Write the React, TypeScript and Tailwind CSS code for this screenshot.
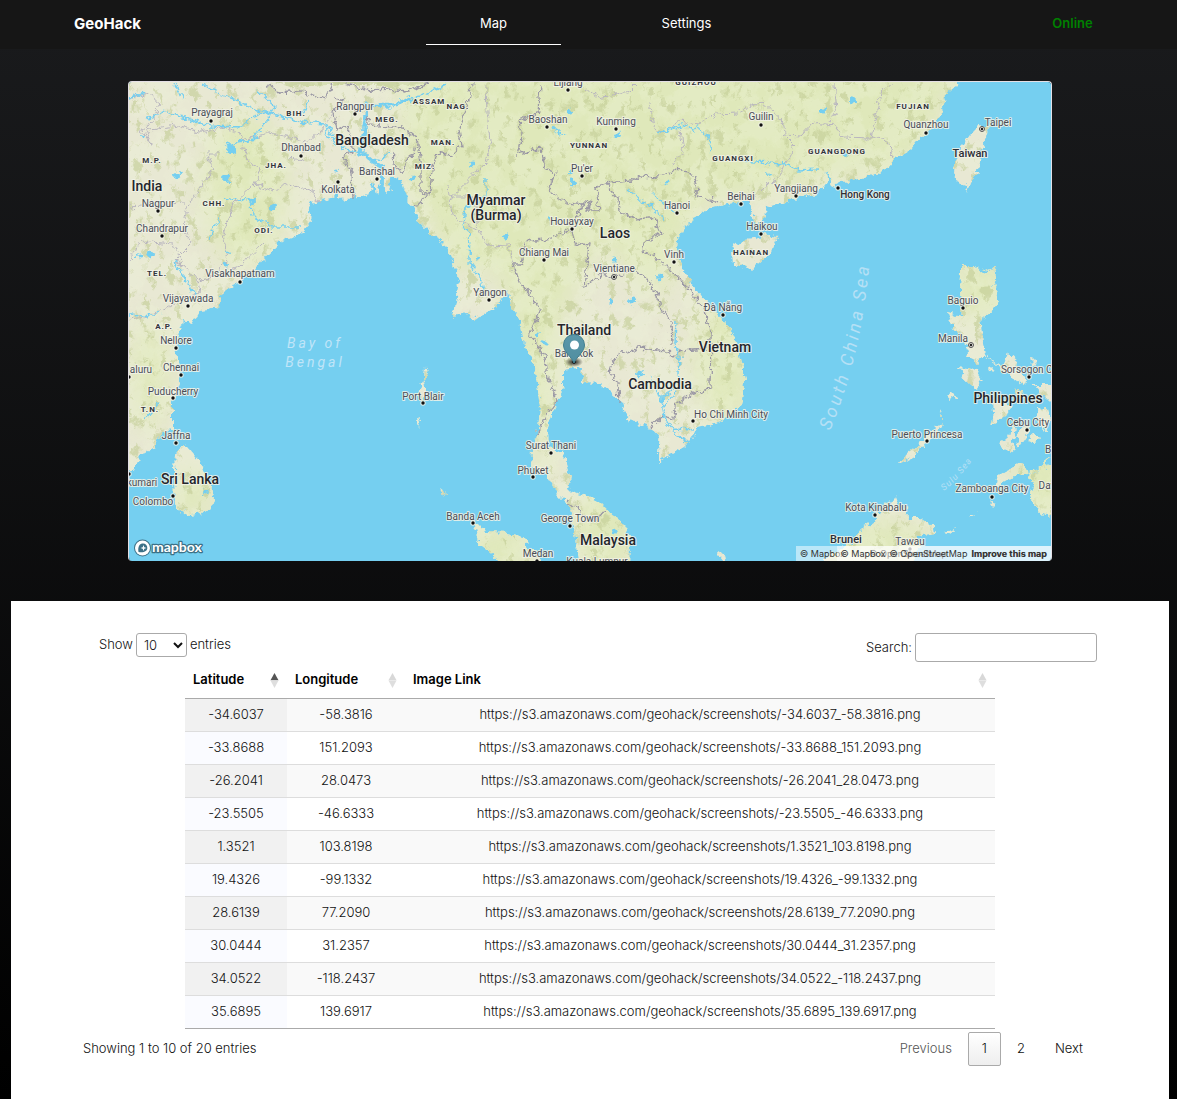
import { useState } from 'react';

type Label = [text: string, x: number, y: number];
type City = [text: string, x: number, y: number, dotX: number, dotY: number];

const countries: Label[] = [
  ['India', 147, 191], ['Bangladesh', 372, 145], ['Myanmar', 496, 205], ['(Burma)', 496, 220],
  ['Laos', 615, 238], ['Thailand', 584, 335], ['Vietnam', 725, 352], ['Cambodia', 660, 389],
  ['Sri Lanka', 190, 484], ['Malaysia', 608, 545], ['Philippines', 1008, 403],
];

const mediumPlaces: Label[] = [['Taiwan', 970, 157], ['Brunei', 846, 543]];

const regions: Label[] = [
  ['BIH.', 296, 116], ['ASSAM', 429, 104], ['NAG.', 458, 109], ['MEG.', 387, 122], ['MAN.', 443, 145],
  ['MIZ.', 425, 169], ['M.P.', 152, 163], ['JHA.', 276, 168], ['CHH.', 214, 206], ['ODI.', 264, 233],
  ['TEL.', 157, 276], ['A.P.', 164, 329], ['T.N.', 150, 412], ['YUNNAN', 589, 148], ['GUIZHOU', 696, 85],
  ['GUANGXI', 733, 161], ['GUANGDONG', 837, 154], ['FUJIAN', 913, 109], ['HAINAN', 751, 255],
];

const cities: City[] = [
  ['Prayagraj', 212, 116, 211, 121], ['Rangpur', 355, 110, 355, 114], ['Dhanbad', 301, 151, 301, 156],
  ['Barishal', 377, 175, 377, 179], ['Kolkata', 338, 193, 338, 182], ['Nagpur', 158, 207, 158, 211],
  ['Chandrapur', 162, 232, 162, 236], ['Visakhapatnam', 240, 277, 240, 282], ['Vijayawada', 188, 302, 188, 306],
  ['Nellore', 176, 344, 176, 348], ['Chennai', 181, 371, 181, 375], ['Puducherry', 173, 395, 173, 398],
  ['aluru', 141, 373, 129, 377], ['Jaffna', 176, 439, 176, 443], ['kumari', 142, 486, 129, 474],
  ['Colombo', 153, 505, 173, 496], ['Port Blair', 423, 400, 423, 403], ['Lijiang', 568, 86, 568, 90],
  ['Baoshan', 548, 123, 547, 127], ['Kunming', 616, 125, 616, 129], ["Pu'er", 582, 172, 582, 176],
  ['Houayxay', 572, 225, 572, 229], ['Chiang Mai', 544, 256, 544, 260], ['Vientiane', 614, 272, 614, 277],
  ['Yangon', 490, 296, 489, 300], ['Hanoi', 677, 209, 677, 213], ['Vinh', 674, 258, 674, 262],
  ['Đà Nẵng', 723, 311, 723, 315], ['Guilin', 761, 120, 761, 125], ['Quanzhou', 926, 128, 926, 133],
  ['Taipei', 998, 126, 982, 129], ['Yangjiang', 796, 192, 796, 196], ['Beihai', 741, 200, 741, 204],
  ['Haikou', 762, 230, 761, 234], ['Bangkok', 574, 357, 574, 362], ['Ho Chi Minh City', 731, 418, 693, 421],
  ['Surat Thani', 551, 449, 551, 453], ['Phuket', 533, 474, 533, 477], ['Banda Aceh', 473, 520, 473, 523],
  ['George Town', 570, 522, 570, 526], ['Medan', 538, 557, 537, 561], ['Kuala Lumpur', 597, 565, 597, 569],
  ['Kota Kinabalu', 876, 511, 875, 515], ['Tawau', 910, 545, 910, 549], ['Puerto Princesa', 927, 438, 927, 441],
  ['Baguio', 963, 304, 963, 308], ['Manila', 953, 342, 971, 345], ['Sorsogon City', 1032, 373, 1029, 377],
  ['Cebu City', 1028, 426, 1027, 430], ['Zamboanga City', 992, 492, 992, 497], ['B', 1048, 453, 1060, 453],
  ['Dav', 1047, 489, 1060, 489],
];

const capitals: [number, number][] = [[614, 277], [982, 129], [971, 345]];

const land = [
  // mainland Asia
  'M120 474L129 474 138 463 140 455 147 453 156 448 156 443 162 432 173 430 173 400 177 387 180 373 178 360 177 340 179 330 183 320 192 323 200 310 210 309 220 305 220 295 237 284 253 272 267 255 280 242 300 235 312 220 308 210 312 203 323 200 333 197 337 190 340 200 353 198 356 192 358 199 368 195 374 181 376 194 382 184 386 193 392 188 389 178 393 178 402 180 407 195 413 208 420 223 430 233 440 238 450 255 457 272 458 288 455 308 453 317 467 314 475 321 487 312 497 307 502 298 508 293 510 305 518 315 520 325 523 340 533 360 537 383 540 407 538 430 532 450 531 467 545 473 558 495 570 507 573 527 577 550 579 570 629 570 630 537 623 523 610 513 600 502 590 497 577 493 568 490 570 477 567 467 562 452 548 447 547 430 552 413 558 398 563 387 563 370 583 367 582 382 600 383 610 392 623 403 627 417 637 423 650 428 660 437 658 453 658 463 663 459 683 447 693 437 697 428 713 425 727 417 740 407 742 400 745 380 742 363 738 345 730 327 723 320 707 302 690 282 682 265 677 248 678 238 693 218 713 207 740 202 750 202 753 215 757 225 766 218 765 208 783 202 800 197 820 192 828 182 825 171 833 187 843 182 863 177 883 172 893 160 910 150 920 138 933 127 943 115 942 106 945 95 957 85 962 72 120 72Z',
  // Hainan and Taiwan
  'M777 237L763 235 755 239 743 240 732 248 733 265 742 267 750 270 760 262 770 254Z',
  'M988 127L980 125 970 135 964 143 958 152 954 163 953 172 958 182 966 185 967 193 970 182 978 172 980 152 986 138Z',
  // Sri Lanka
  'M180 445L187 446 200 461 207 478 213 490 214 500 209 508 202 513 188 515 179 511 175 500 174 470 175 456Z',
  // Luzon
  'M961 265L975 265 981 272 987 270 995 267 996 275 993 285 999 295 995 308 980 320 981 325 983 343 987 357 1003 367 1008 353 1018 362 1017 370 1028 383 1023 385 1008 374 993 362 985 356 977 363 965 357 967 350 971 347 963 340 953 328 948 312 960 316 962 305 960 292 961 275Z',
  // Mindoro, Panay, Negros, Cebu, Samar and Bohol
  'M959 367L974 369 981 379 977 391 967 382Z',
  'M993 401L1003 399 1012 406 1005 416 991 425 994 414Z',
  'M1012 425L1016 430 1012 443 1016 449 1010 454 999 443 1010 438Z',
  'M1028 420L1030 430 1018 448 1017 436Z',
  'M1026 440L1034 433 1040 437 1034 443Z',
  'M1034 385L1060 385 1060 402 1047 400Z',
  'M1038 410L1048 409 1051 420 1044 432 1039 424Z',
  'M1015 389L1028 397 1021 399Z',
  'M1031 357L1037 363 1032 365Z',
  'M988 369L993 367 991 373Z',
  'M1060 452L1050 458 1044 468 1039 470 1031 475 1019 473 1005 481 994 487 997 476 1007 470 1020 464 1024 465 1029 475 1038 472 1046 460 1060 452Z',
  'M1048 466L1060 460 1060 519 1042 514 1032 504 1030 493 1035 483 1028 478 1030 472Z',
  // Palawan
  'M943 422L938 433 926 442 916 455 901 464 898 464 906 454 922 441 934 429Z',
  // Borneo
  'M820 570L828 556 842 548 852 541 863 528 875 520 882 510 887 502 889 512 896 495 899 511 906 508 907 518 920 518 935 528 936 533 916 536 925 545 912 553 918 570Z',
  // Sumatra
  'M474 523L486 531 508 532 520 535 530 548 538 554 542 570 512 570 495 557 480 545Z',
  // small islands
  'M425 367L428 374 424 381 426 395 422 403 420 390 424 377Z',
  'M418 417L420 422 418 426 416 421Z',
  'M441 490L445 493 443 497Z',
  'M720 552L726 556 722 561 718 556Z',
  'M950 392L957 396 949 401Z M941 410L942 420 939 417Z',
  'M989 501L996 504 993 507Z M969 515L978 513 970 517Z M946 532L956 529 948 534Z',
].join('');

const borders = [
  'M266 84L280 93 300 91 326 99 333 84M345 84L370 90 390 89 405 91 430 84',
  'M333 98L345 100 334 112 337 130 347 125 354 150 343 158 352 172 353 199M367 110L368 125 404 128 417 138 414 155 407 158 403 172 393 165 394 151M417 138L421 163 421 192 430 195',
  'M472 84L466 112 459 128 462 146 451 156 436 153 432 170 430 192 415 208',
  'M540 84L538 112 520 120 522 135 517 154 541 148 545 168 555 173 548 190 568 203 583 205 590 200 587 210 599 210 596 188 606 184 619 182 632 181 640 176 658 177 674 170 690 172 697 184 696 195 720 203',
  'M606 184L618 198 620 211 636 220 654 216 661 233 644 243 642 250 665 264 684 283 702 305 707 318M583 205L576 217 571 229 575 243 589 245 586 272 584 286 602 274 614 277 635 270 648 281 657 293 660 309 671 321 672 345',
  'M571 229L552 238 536 241 526 239 521 265 513 265 519 282 533 297 541 310 529 335 545 356 548 378 557 400 546 416 536 436',
  'M619 403L618 383 609 371 616 355 640 348 667 351 673 358 681 350 707 348M707 318L711 336 710 389 690 394 675 406 674 419 662 416 650 427M567 501L575 507 587 519 597 519 605 510',
].join('');

const provinces = [
  'M129 99L147 93 159 103 153 122 141 129 152 145 145 130 174 125 200 132 226 127 245 139 270 133 309 141 325 127 333 112',
  'M241 139L248 160 261 170 255 184 234 204 223 234 228 260 216 274 198 282 186 267 175 260 191 244 183 228 187 208 203 182 214 169 207 154 222 154M255 184L272 192 289 184 313 192 319 204M289 160L304 158 302 150M129 207L183 203M129 260L142 241 173 244 184 268M198 282L200 292 177 302 146 317 129 319M198 282L240 266 264 243',
  'M486 84L487 113 491 140 486 163 450 198 452 215 480 231 486 246 508 245 513 265M448 184L449 197 474 197 478 231',
  'M637 84L630 91 599 98 586 88M649 101L654 129 664 133 680 121 698 124 715 114 738 113M680 130L683 151 672 166M740 111L762 102 782 120 784 135 794 145 785 165 780 176 764 188 748 203M784 135L800 136 813 122 834 125 843 137 871 138 876 115 882 90 894 82M834 84L837 109 829 122M871 137L887 140 893 158',
].join('');

const rivers = [
  'M129 99L145 92M174 84L182 98M202 84L218 93 236 100 254 110 276 114 300 122 325 124 329 138 345 150 366 154 380 167 382 183M145 120L164 112 190 119 210 126 242 127 250 118 268 113M270 116L253 140 225 145M268 113L275 107 256 89M301 117L310 101',
  'M364 153L363 126 368 104 390 105 410 98 420 97 447 84M376 162L390 152M327 124L335 140',
  'M225 198L229 199 251 200 252 216 273 227 300 227M209 238L220 217M174 260L183 275 196 294 200 300M160 402L145 419M129 314L153 316 160 312',
  'M552 220L548 218M486 179L486 196 465 208 463 224 470 235 469 262 480 278 484 294M550 127L565 135M627 189L645 203 666 219M652 192L671 210 678 216M657 133L671 130 685 124 694 132 697 125 707 137 712 153M826 171L832 185M740 161L785 164 799 170 818 169M676 320L675 344 680 358 678 387 662 397 664 419M650 376L658 391 663 406 676 392M664 419L674 432 690 443M672 429L694 430M678 437L692 443',
].join('');

const lakes: [number, number, number][] = [
  [143, 137, 2], [177, 175, 4], [231, 149, 5], [226, 178, 4], [252, 201, 4], [274, 206, 4], [337, 171, 2],
  [413, 178, 3], [473, 164, 3], [569, 111, 3], [617, 135, 3], [614, 259, 3], [611, 302, 3], [660, 277, 4],
  [632, 302, 3], [640, 374, 4], [545, 342, 3], [537, 335, 3], [823, 111, 3], [853, 101, 3], [845, 154, 3],
  [770, 175, 2], [667, 182, 3], [570, 172, 3], [573, 183, 3], [205, 492, 2], [228, 252, 2], [226, 264, 3],
  [140, 257, 3], [151, 255, 4], [615, 532, 3], [479, 258, 2], [506, 237, 3],
];

function MapCanvas() {
  return (
    <svg
      viewBox="129 82 922 479"
      preserveAspectRatio="xMidYMid slice"
      className="block h-full w-full font-['Roboto',sans-serif]"
      role="img"
      aria-label="Map of South East Asia"
    >
      <defs>
        <filter id="coast" x="0" y="0" width="1" height="1">
          <feTurbulence type="fractalNoise" baseFrequency="0.16" numOctaves="3" seed="4" />
          <feDisplacementMap in="SourceGraphic" scale="9" xChannelSelector="R" yChannelSelector="G" />
        </filter>
        <filter id="relief" x="0" y="0" width="1" height="1">
          <feTurbulence type="fractalNoise" baseFrequency="0.035" numOctaves="5" seed="9" result="n" />
          <feColorMatrix type="matrix" values="0 0 0 0 .86  0 0 0 0 .91  0 0 0 0 .70  6 0 0 0 -2.5" result="c" />
          <feComposite in="c" in2="SourceAlpha" operator="in" />
        </filter>
        <filter id="ridges" x="0" y="0" width="1" height="1" colorInterpolationFilters="sRGB">
          <feTurbulence type="fractalNoise" baseFrequency="0.12 0.07" numOctaves="4" seed="21" />
          <feColorMatrix type="matrix" values="0 0 0 0 .76  0 0 0 0 .80  0 0 0 0 .58  0 7 0 0 -4" result="c" />
          <feComposite in="c" in2="SourceAlpha" operator="in" />
        </filter>
        <filter id="soften" colorInterpolationFilters="sRGB"><feGaussianBlur stdDeviation="12" /></filter>
        <clipPath id="landClip"><path d={land} /></clipPath>
        <linearGradient id="pin" x1="0" x2="0" y1="0" y2="1">
          <stop offset="0" stopColor="#5b98aa" />
          <stop offset="1" stopColor="#508ea0" />
        </linearGradient>
        <radialGradient id="shade">
          <stop offset="0" stopColor="#000" stopOpacity=".9" />
          <stop offset=".5" stopColor="#000" stopOpacity=".45" />
          <stop offset="1" stopColor="#000" stopOpacity="0" />
        </radialGradient>
      </defs>
      <rect x="128" y="81" width="924" height="480" fill="#75cff0" />
      <g filter="url(#coast)">
        <rect x="118" y="71" width="944" height="500" fill="none" />
        <path d={land} fill="#e8e8d3" />
        <g clipPath="url(#landClip)">
          <g filter="url(#soften)" fill="#dfe8ba">
            <path d="M400 60L970 60 910 165 700 205 660 300 600 240 560 320 545 510 500 270 455 270 405 180Z" />
            <ellipse cx="245" cy="190" rx="42" ry="75" />
            <ellipse cx="725" cy="360" rx="30" ry="65" />
            <ellipse cx="605" cy="530" rx="32" ry="45" />
            <ellipse cx="980" cy="290" rx="30" ry="32" />
            <ellipse cx="880" cy="545" rx="55" ry="25" />
            <ellipse cx="192" cy="495" rx="20" ry="25" />
            <ellipse cx="500" cy="550" rx="38" ry="24" />
            <ellipse cx="1045" cy="480" rx="30" ry="40" />
            <ellipse cx="150" cy="375" rx="18" ry="55" />
          </g>
          <path d="M250 72L430 72 427 83 390 87 350 84 290 87Z" fill="#cdd6a6" />
        </g>
        <path d={land} filter="url(#relief)" opacity=".3" />
        <path d={land} filter="url(#ridges)" opacity=".6" />
        <path d={provinces} fill="none" stroke="#b9b6bf" strokeWidth="1" />
        <path d={borders} fill="none" stroke="#9b98a5" strokeWidth="1.3" />
        <path d={rivers} fill="none" stroke="#75cff0" strokeWidth="1.4" />
        <path d="M360 154L364 130 367 106 390 105 412 99M362 154L382 168 381 188" fill="none" stroke="#75cff0" strokeWidth="3" />
        {lakes.map(([x, y, r]) => (
          <ellipse key={`${x}-${y}`} cx={x} cy={y} rx={r} ry={r * 0.8} fill="#75cff0" />
        ))}
      </g>

      <g fill="#c0e5f8" fontSize="14" fontStyle="italic" letterSpacing="3" textAnchor="middle">
        <text x="315" y="348">Bay of</text>
        <text x="315" y="367">Bengal</text>
      </g>
      <path id="chinaSea" d="M830 431Q862 355 870 258" fill="none" />
      <path id="suluSea" d="M944 491Q964 474 978 452" fill="none" />
      <text fill="#b5e0f5" fontSize="18" fontStyle="italic" letterSpacing="3"><textPath href="#chinaSea">South China Sea</textPath></text>
      <text fill="#b5e0f5" fontSize="9" fontStyle="italic" letterSpacing="1"><textPath href="#suluSea">Sulu Sea</textPath></text>

      <g textAnchor="middle" stroke="#f2f3e8" strokeOpacity=".85" strokeWidth="2" strokeLinejoin="round" style={{ paintOrder: 'stroke' }}>
        <g fill="#4a4d57" fontSize="10">
          {cities.map(([name, x, y, dotX, dotY]) => (
            <g key={name}>
              <text x={x} y={y}>{name}</text>
              <circle cx={dotX} cy={dotY} r="1.7" fill="#111" />
            </g>
          ))}
        </g>
        <g fill="#33353c" fontSize="8" fontWeight="700" letterSpacing="1">
          {regions.map(([name, x, y]) => <text key={name} x={x} y={y}>{name}</text>)}
        </g>
        <g fill="#24262c" fontSize="14" fontWeight="500">
          {countries.map(([name, x, y]) => <text key={name} x={x} y={y}>{name}</text>)}
        </g>
        <g fill="#2d2f36" fontSize="11" fontWeight="500">
          {mediumPlaces.map(([name, x, y]) => <text key={name} x={x} y={y}>{name}</text>)}
          <text x="865" y="198" fontSize="10">Hong Kong</text>
          <circle cx="838" cy="188" r="1.7" fill="#111" />
        </g>
      </g>
      {capitals.map(([x, y]) => (
        <g key={x}>
          <circle cx={x} cy={y} r="2.5" fill="#e8e8e0" stroke="#555" strokeWidth="1" />
          <circle cx={x} cy={y} r="1.2" fill="#222" />
        </g>
      ))}

      <ellipse cx="574" cy="362" rx="9" ry="5" fill="url(#shade)" />
      <path d="M574 363C571 356 563.500 352 563.500 345A10.500 10.500 0 0 1 584.500 345C584.500 352 577 356 574 363Z" fill="url(#pin)" stroke="#43808f" strokeWidth="1" />
      <circle cx="574.500" cy="345" r="4.500" fill="#fff" />

      <circle cx="142.500" cy="548" r="8.500" fill="#3c7187" />
      <circle cx="142.500" cy="548" r="7.500" fill="#fff" />
      <path d="M138.500 552C137.500 546 140 543.500 143 543.500A4.300 4.300 0 0 1 147.300 548C147.300 551 144 553 138.500 552Z" fill="#3c7187" />
      <path d="M143.500 545L144.300 547.200 146.500 548 144.300 548.800 143.500 551 142.700 548.800 140.500 548 142.700 547.200Z" fill="#fff" />
      <text x="152" y="552" fill="#fff" stroke="#3c7187" strokeWidth="2.500" strokeLinejoin="round" fontSize="14" fontWeight="700" fontFamily="Lato, sans-serif" style={{ paintOrder: 'stroke' }}>mapbox</text>
    </svg>
  );
}

const rows: [string, string][] = [
  ['-34.6037', '-58.3816'], ['-33.8688', '151.2093'], ['-26.2041', '28.0473'], ['-23.5505', '-46.6333'],
  ['1.3521', '103.8198'], ['19.4326', '-99.1332'], ['28.6139', '77.2090'], ['30.0444', '31.2357'],
  ['34.0522', '-118.2437'], ['35.6895', '139.6917'],
];

function SortIcon({ active = false }: { active?: boolean }) {
  return (
    <svg width="9" height="15" viewBox="0 0 9 15" className="mr-1 shrink-0" aria-hidden="true">
      <path d="M4.500 0L8.500 7.200H.5Z" fill={active ? '#555' : '#d8d8d8'} />
      <path d="M.5 7.600H8.500L4.500 15Z" fill="#dedede" />
    </svg>
  );
}

function HeaderCell({ title, active }: { title: string; active?: boolean }) {
  return (
    <th className="border-b border-[#aaa] p-0" scope="col" aria-sort={active ? 'ascending' : 'none'}>
      <button type="button" className="flex h-9 w-full items-center justify-between pr-1 pl-2 font-semibold">
        {title}
        <SortIcon active={active} />
      </button>
    </th>
  );
}

function Attribution({ className }: { className: string }) {
  return (
    <div className={`absolute right-0 bottom-0 flex h-[15px] bg-white/50 px-1 text-[9px] leading-[15px] whitespace-nowrap text-[#333] ${className}`}>
      <a href="#mapbox">© Mapbox</a>
      <a href="#osm">© OpenStreetMap</a>
      <a href="#improve" className="font-bold">Improve this map</a>
    </div>
  );
}

export default function App() {
  const [search, setSearch] = useState('');
  const [size, setSize] = useState('10');

  return (
    <div className="flex min-h-screen flex-col bg-linear-to-b/srgb from-[#1a1b1d] to-black font-['Inter',sans-serif] text-[13px]">
      <nav className="grid h-[49px] grid-cols-6 justify-items-center bg-[#161616] pr-2 pl-[11px] text-white">
        <a href="#home" className="pt-3 text-[15px] leading-6 font-bold">GeoHack</a>
        <a href="#map" className="col-start-3 h-[45px] w-[135px] border-b border-white pt-3 text-center leading-[22px]">Map</a>
        <a href="#settings" className="pt-3 leading-[22px]">Settings</a>
        <span className="col-start-6 pt-3 leading-[22px] font-semibold text-[#008000]">Online</span>
      </nav>

      <main className="flex grow flex-col pr-2 pl-[11px]">
        <div className="relative mx-auto mt-8 h-[480px] w-4/5 max-w-[924px] overflow-hidden rounded-sm border-x border-t border-[#e4dfe5]">
          <MapCanvas />
          <Attribution className="w-[255px] justify-between" />
          <Attribution className="gap-1" />
        </div>

        <section className="mt-10 grow bg-white px-[72px] pt-8 pb-8 font-light text-[#111]">
          <div className="flex items-start justify-between pl-4">
            <label className="flex items-center gap-[3px]">
              Show
              <select value={size} onChange={(e) => setSize(e.target.value)} className="h-6 w-[51px] rounded-[3px] border border-[#aaa] bg-transparent pl-[3px]">
                <option>10</option>
                <option>25</option>
                <option>50</option>
                <option>100</option>
              </select>
              entries
            </label>
            <label className="flex items-center gap-[3px]">
              Search:
              <input type="search" value={search} onChange={(e) => setSearch(e.target.value)} className="h-[29px] w-[182px] rounded-[3px] border border-[#aaa] px-1" />
            </label>
          </div>

          <table className="mx-auto w-4/5 max-w-[810px] border-separate border-spacing-0 border-b border-[#aaa] text-center">
            <colgroup>
              <col className="w-[102px]" />
              <col className="w-[118px]" />
              <col />
            </colgroup>
            <thead className="text-black">
              <tr>
                <HeaderCell title="Latitude" active />
                <HeaderCell title="Longitude" />
                <HeaderCell title="Image Link" />
              </tr>
            </thead>
            <tbody className="[&>tr:last-child>td]:h-8 [&>tr:last-child>td]:border-b-0">
              {rows.map(([lat, lng]) => (
                <tr key={lat} className="group odd:bg-[#f9f9f9]">
                  <td className="h-[33px] border-b border-[#ddd] bg-[#fafbff] p-0 group-odd:bg-[#f1f1f1]">{lat}</td>
                  <td className="border-b border-[#ddd] p-0">{lng}</td>
                  <td className="border-b border-[#ddd] p-0">{`https://s3.amazonaws.com/geohack/screenshots/${lat}_${lng}.png`}</td>
                </tr>
              ))}
            </tbody>
          </table>

          <div className="flex items-start justify-between pt-[3px]">
            <p className="leading-8">Showing 1 to 10 of 20 entries</p>
            <div className="flex h-[34px] gap-[2px]">
              <button type="button" disabled className="px-[14px] text-[#555]">Previous</button>
              <button type="button" className="w-[33px] rounded-[2px] border border-[#aaa] bg-linear-to-b from-white to-[#eee]">1</button>
              <button type="button" className="w-9">2</button>
              <button type="button" className="px-[14px]">Next</button>
            </div>
          </div>
        </section>
      </main>
    </div>
  );
}
